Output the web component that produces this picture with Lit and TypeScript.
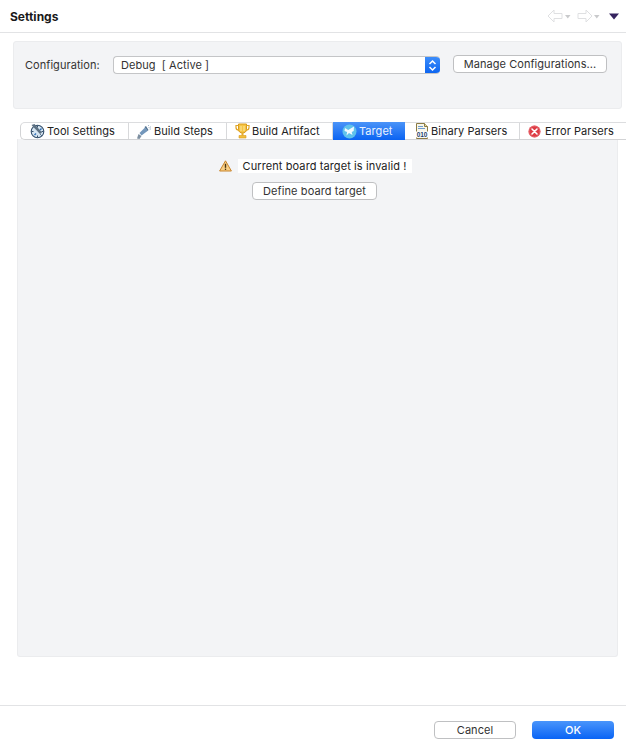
import { LitElement, html, css } from "lit";
import { customElement } from "lit/decorators.js";

@customElement("app-root")
export class AppRoot extends LitElement {
  static styles = css`
    :host { display: block; width: 626px; height: 751px; background: #fff; overflow: hidden;
      font-family: Inter, "Liberation Sans", sans-serif; font-size: 11px; letter-spacing: .05px; color: #222; }
    * { box-sizing: border-box; }
    .root { display: flex; flex-direction: column; height: 751px; }
    .header { height: 33px; flex: none; border-bottom: 1px solid #e2e3e5; display: flex; align-items: center; justify-content: space-between; padding: 0 7px 0 10px; }
    .title { font-weight: 700; font-size: 12px; letter-spacing: 0; color: #1a1a1a; }
    .nav { display: flex; align-items: center; }
    .nav svg { display: block; }
    .caret-a { margin: 1px 6px 0 2px; }
    .caret-b { margin: 1px 8px 0 1px; }
    .menu { margin-left: 1px; }
    .config { margin: 8px 4px 0 13px; height: 68px; background: #f3f4f6; border: 1px solid #ebecee; border-radius: 3px; display: flex; align-items: flex-start; padding: 13px 14px 0 11px; }
    .cfg-label { width: 88px; line-height: 18px; margin-top: 1px; color: #333; }
    .select { width: 327px; height: 18px; margin-top: 1px; background: #fff; border: 1px solid #c4c5c7; border-right: 0; border-radius: 4px; display: flex; justify-content: space-between; overflow: hidden; }
    .select-text { padding-left: 7px; line-height: 16px; color: #333; }
    .select-btn { width: 15px; height: 18px; margin-top: -1px; background: linear-gradient(#3f8ffb, #0a63f0); display: flex; align-items: center; justify-content: center; }
    .btn { background: #fff; border: 1px solid #bfc0c2; border-radius: 4px; height: 18px; display: flex; align-items: center; justify-content: center; color: #333; }
    .manage { width: 154px; margin-left: 13px; }
    .tabwrap { margin-top: 13px; position: relative; }
    .tabs { margin-left: 20px; height: 18px; display: flex; background: #fff; border: 1px solid #d2d3d5; border-right: 0; border-radius: 5px 0 0 5px; position: relative; z-index: 1; border-top-color: #dcdddf; }
    .tab { flex: none; display: flex; align-items: center; gap: 2px; border-right: 1px solid #d8d9db; color: #222; height: 16px; white-space: nowrap; }
    .tab:last-child { border-right: 0; }
    .tab svg { flex: none; }
    .tab.sel { background: linear-gradient(#4b94f8, #0a63f2); color: #e9f2ff; height: 18px; margin-top: -1px; border-right: 0; }
    .err-icon { margin-right: 2px; }
    .panel { margin: -1px 8px 0 17px; height: 518px; background: #f3f4f6; border: 1px solid #ebecee; border-top: 0; border-radius: 0 0 3px 3px; display: flex; flex-direction: column; align-items: center; padding-top: 20px; }
    .warn { display: flex; align-items: center; gap: 6px; margin-left: -4px; height: 14px; }
    .warn span { background: #fff; padding: 0 6px 0 5px; line-height: 14px; color: #222; letter-spacing: .1px; }
    .define { width: 125px; margin-top: 9px; margin-left: -6px; letter-spacing: .1px; }
    .spacer { flex: 1; }
    .footer { height: 46px; flex: none; border-top: 1px solid #e2e3e5; display: flex; justify-content: flex-end; align-items: flex-start; gap: 16px; padding: 15px 12px 0 0; }
    .cancel { width: 82px; }
    .ok { width: 82px; height: 18px; border-radius: 4px; background: linear-gradient(#4a95fb, #0a64f5); color: #fff; font-weight: 500; display: flex; align-items: center; justify-content: center; }
  `;

  private tab(w: number, label: string, icon: unknown, pad: number, sel = false) {
    return html`<div class="tab ${sel ? "sel" : ""}" style="width:${w}px;padding-left:${pad}px">${icon}<span>${label}</span></div>`;
  }

  render() {
    const tool = html`<svg width="15" height="15" viewBox="0 0 15 15"><circle cx="7.5" cy="7.5" r="6.3" fill="#d6e5f1" stroke="#35506c" stroke-width="1.1"/><path d="M7.5 1.5v2M1.5 7.5h2M13.5 7.5h-2M7.5 13.5v-2M11.7 11.7l-1.4-1.4" stroke="#35506c"/><path d="M1.5 1l8.5 9 2-1.5L4.5 0z" fill="#5d7183"/><path d="M9.5 5.5l1.5-1.5 1 1-1.5 1.5zM4 10.5l1.5-1.5 1 1L5 11.5z" fill="#2f6fb5"/></svg>`;
    const steps = html`<svg width="15" height="15" viewBox="0 0 15 15"><path d="M0 14.5l1.5-4.5 3 2-2 3z" fill="#7d8fa0"/><path d="M2.5 9L8 3.5l2.5 3.5-6 4.5z" fill="#7397bb"/><path d="M7.5 3l1.5-1 2.5 4-1 1z" fill="#527392"/><path d="M11 1.5h1M13 3h1M12.5 5h1.5M11.5 3.5h1" stroke="#a4b8cb"/></svg>`;
    const artifact = html`<svg width="15" height="16" viewBox="0 0 15 16"><path d="M3.5 1h8v5.5c0 2.2-1.8 3.5-4 3.5s-4-1.3-4-3.5z" fill="#f6c544" stroke="#d89a1c"/><path d="M3.5 2.5H1v2c0 1.6 1.2 2.6 3 2.6M11.5 2.5H14v2c0 1.6-1.2 2.6-3 2.6" fill="none" stroke="#e0a526" stroke-width="1.2"/><path d="M6 3v5M9 3v5" stroke="#fbe7a2"/><path d="M6.5 10h2v2.5h-2z" fill="#e6ad2d"/><path d="M4 12.5h7v2.5H4z" fill="#f3bf3c" stroke="#d89a1c" stroke-width=".6"/></svg>`;
    const target = html`<svg width="15" height="15" viewBox="0 0 15 15"><circle cx="7.5" cy="7.5" r="7" fill="#5fc2ec"/><path d="M3 4l3.2 2 5.8-3.5-.3 4.5-2 1 .8 3L7 9l-2.5 2.5.6-3.5L2.5 7z" fill="#f2faff"/></svg>`;
    const binary = html`<svg width="14" height="16" viewBox="0 0 14 16"><path d="M1.5.5h8l3 3v12h-11z" fill="#f8f6e8" stroke="#8a7b45"/><path d="M9.5.5v3h3" fill="#e8d9a0" stroke="#8a7b45"/><path d="M3 3.5h5M3 5.5h7" stroke="#6f9bcf" stroke-width="1.2"/><path d="M.5 8.5h13v6H.5z" fill="#fff"/><text x="7" y="14" text-anchor="middle" font-family="Liberation Sans, sans-serif" font-size="6.5" font-weight="700" letter-spacing="-.1" fill="#243f6a">010</text></svg>`;
    const error = html`<svg class="err-icon" width="13" height="13" viewBox="0 0 13 13"><circle cx="6.5" cy="6.5" r="6" fill="#dd3c45"/><circle cx="6.5" cy="6.5" r="5.5" fill="none" stroke="#f0858a" stroke-width=".6"/><path d="M4 4l5 5M9 4l-5 5" stroke="#fff" stroke-width="1.6" stroke-linecap="round"/></svg>`;
    const warn = html`<svg width="13" height="12" viewBox="0 0 13 12"><path d="M6.5.8L12.4 11H.6z" fill="#f8cf85" stroke="#c8832b" stroke-linejoin="round"/><path d="M6.5 3.8v4" stroke="#4a3413" stroke-width="1.4"/><path d="M6.5 8.6v1.4" stroke="#4a3413" stroke-width="1.3"/></svg>`;
    const left = html`<svg width="16" height="14" viewBox="0 0 16 14"><path d="M7 1L1 7l6 6V9.5h8v-5H7z" fill="#fff" stroke="#dfe0e2"/></svg>`;
    const right = html`<svg width="16" height="14" viewBox="0 0 16 14"><path d="M9 1l6 6-6 6V9.5H1v-5h8z" fill="#fff" stroke="#dfe0e2"/></svg>`;
    const caret = (cls: string) => html`<svg class=${cls} width="6" height="5" viewBox="0 0 6 5"><path d="M0 1h5.5L2.8 4.5z" fill="#c9cacc"/></svg>`;
    return html`<div class="root">
      <div class="header">
        <div class="title">Settings</div>
        <div class="nav">${left}${caret("caret-a")}${right}${caret("caret-b")}
          <svg class="menu" width="10" height="7" viewBox="0 0 10 7"><path d="M0 .5h10L5 6.5z" fill="#35245f"/></svg>
        </div>
      </div>
      <div class="config">
        <div class="cfg-label">Configuration:</div>
        <div class="select">
          <div class="select-text">Debug&nbsp; [ Active ]</div>
          <div class="select-btn"><svg width="9" height="13" viewBox="0 0 9 13"><path d="M1.5 5l3-3 3 3M1.5 8l3 3 3-3" fill="none" stroke="#fff" stroke-width="1.5"/></svg></div>
        </div>
        <div class="btn manage">Manage Configurations...</div>
      </div>
      <div class="tabwrap">
        <div class="tabs">
          ${this.tab(108, "Tool Settings", tool, 9)}
          ${this.tab(98, "Build Steps", steps, 8)}
          ${this.tab(106, "Build Artifact", artifact, 8)}
          ${this.tab(72, "Target", target, 9, true)}
          ${this.tab(115, "Binary Parsers", binary, 10)}
          ${this.tab(106, "Error Parsers", error, 8)}
        </div>
      </div>
      <div class="panel">
        <div class="warn">${warn}<span>Current board target is invalid !</span></div>
        <div class="btn define">Define board target</div>
      </div>
      <div class="spacer"></div>
      <div class="footer">
        <div class="btn cancel">Cancel</div>
        <div class="ok">OK</div>
      </div>
    </div>`;
  }
}
